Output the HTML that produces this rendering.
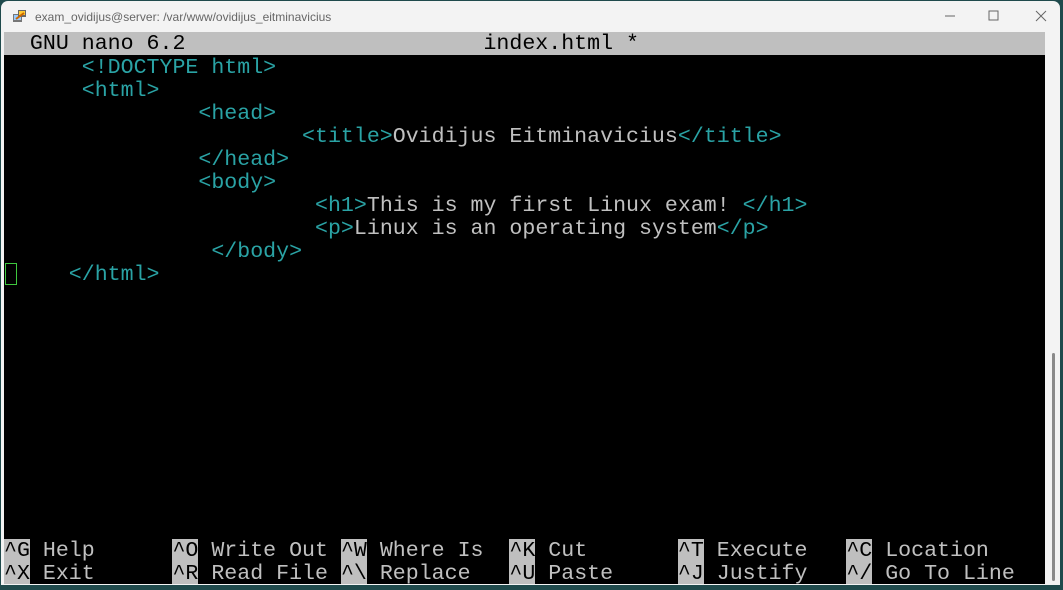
<!DOCTYPE html>
<html><head><style>
html,body{margin:0;padding:0;width:1063px;height:590px;overflow:hidden;background:#1f4a4c;}
.win{position:absolute;left:1px;top:1px;width:1059px;height:584px;background:#f3f3f3;border-radius:7px 7px 0 0;}
.title{position:absolute;left:34px;top:9px;font:12px "Liberation Sans",sans-serif;color:#666;}
.term{position:absolute;left:4px;top:32px;width:1041px;height:552px;background:#000;overflow:hidden;}
.r{position:absolute;left:0;height:23px;line-height:23px;font-family:"Liberation Mono",monospace;font-size:21.6px;white-space:pre;color:#c0c0c0;}
.t{color:#2aa3a5}
.hl{background:#bfbfbf;color:#000}
.sb{position:absolute;left:1052px;top:353px;width:3px;height:228px;background:#8a8a8a;border-radius:2px}
</style></head><body>
<div class="win">
<svg style="position:absolute;left:10px;top:7px" width="18" height="18" viewBox="0 0 18 18"><rect x="2" y="6" width="9" height="8" fill="#777"/><rect x="3" y="7" width="7" height="5" fill="#9cf"/><rect x="7" y="2" width="8" height="7" fill="#666"/><rect x="8" y="3" width="6" height="4" fill="#fc3"/><path d="M5 11 L13 5" stroke="#c60" stroke-width="2"/></svg>
<div class="title">exam_ovidijus@server: /var/www/ovidijus_eitminavicius</div>
<svg style="position:absolute;left:936px;top:6px" width="120" height="20"><line x1="8" y1="9" x2="18" y2="9" stroke="#666"/><rect x="52" y="4" width="9" height="9" fill="none" stroke="#666"/><path d="M99 4 L109 14 M109 4 L99 14" stroke="#666"/></svg>
</div>
<div class="term">
<div class="r hl" style="top:0;width:1041px;height:23px;line-height:25px">  GNU nano 6.2                       index.html *</div>
<div class="r" style="top:25px">      <span class="t">&lt;!DOCTYPE html&gt;</span></div>
<div class="r" style="top:48px">      <span class="t">&lt;html&gt;</span></div>
<div class="r" style="top:71px">               <span class="t">&lt;head&gt;</span></div>
<div class="r" style="top:94px">                       <span class="t">&lt;title&gt;</span>Ovidijus Eitminavicius<span class="t">&lt;/title&gt;</span></div>
<div class="r" style="top:117px">               <span class="t">&lt;/head&gt;</span></div>
<div class="r" style="top:140px">               <span class="t">&lt;body&gt;</span></div>
<div class="r" style="top:163px">                        <span class="t">&lt;h1&gt;</span>This is my first Linux exam! <span class="t">&lt;/h1&gt;</span></div>
<div class="r" style="top:186px">                        <span class="t">&lt;p&gt;</span>Linux is an operating system<span class="t">&lt;/p&gt;</span></div>
<div class="r" style="top:209px">                <span class="t">&lt;/body&gt;</span></div>
<div style="position:absolute;left:1px;top:231px;width:12px;height:22px;border:1px solid #3ec83e;box-sizing:border-box"></div>
<div class="r" style="top:232px">     <span class="t">&lt;/html&gt;</span></div>
<div class="r" style="top:508px"><span class="hl">^G</span> Help      <span class="hl">^O</span> Write Out <span class="hl">^W</span> Where Is  <span class="hl">^K</span> Cut       <span class="hl">^T</span> Execute   <span class="hl">^C</span> Location</div>
<div class="r" style="top:531px"><span class="hl">^X</span> Exit      <span class="hl">^R</span> Read File <span class="hl">^\</span> Replace   <span class="hl">^U</span> Paste     <span class="hl">^J</span> Justify   <span class="hl">^/</span> Go To Line</div>
</div>
<div class="sb"></div>
</body></html>
